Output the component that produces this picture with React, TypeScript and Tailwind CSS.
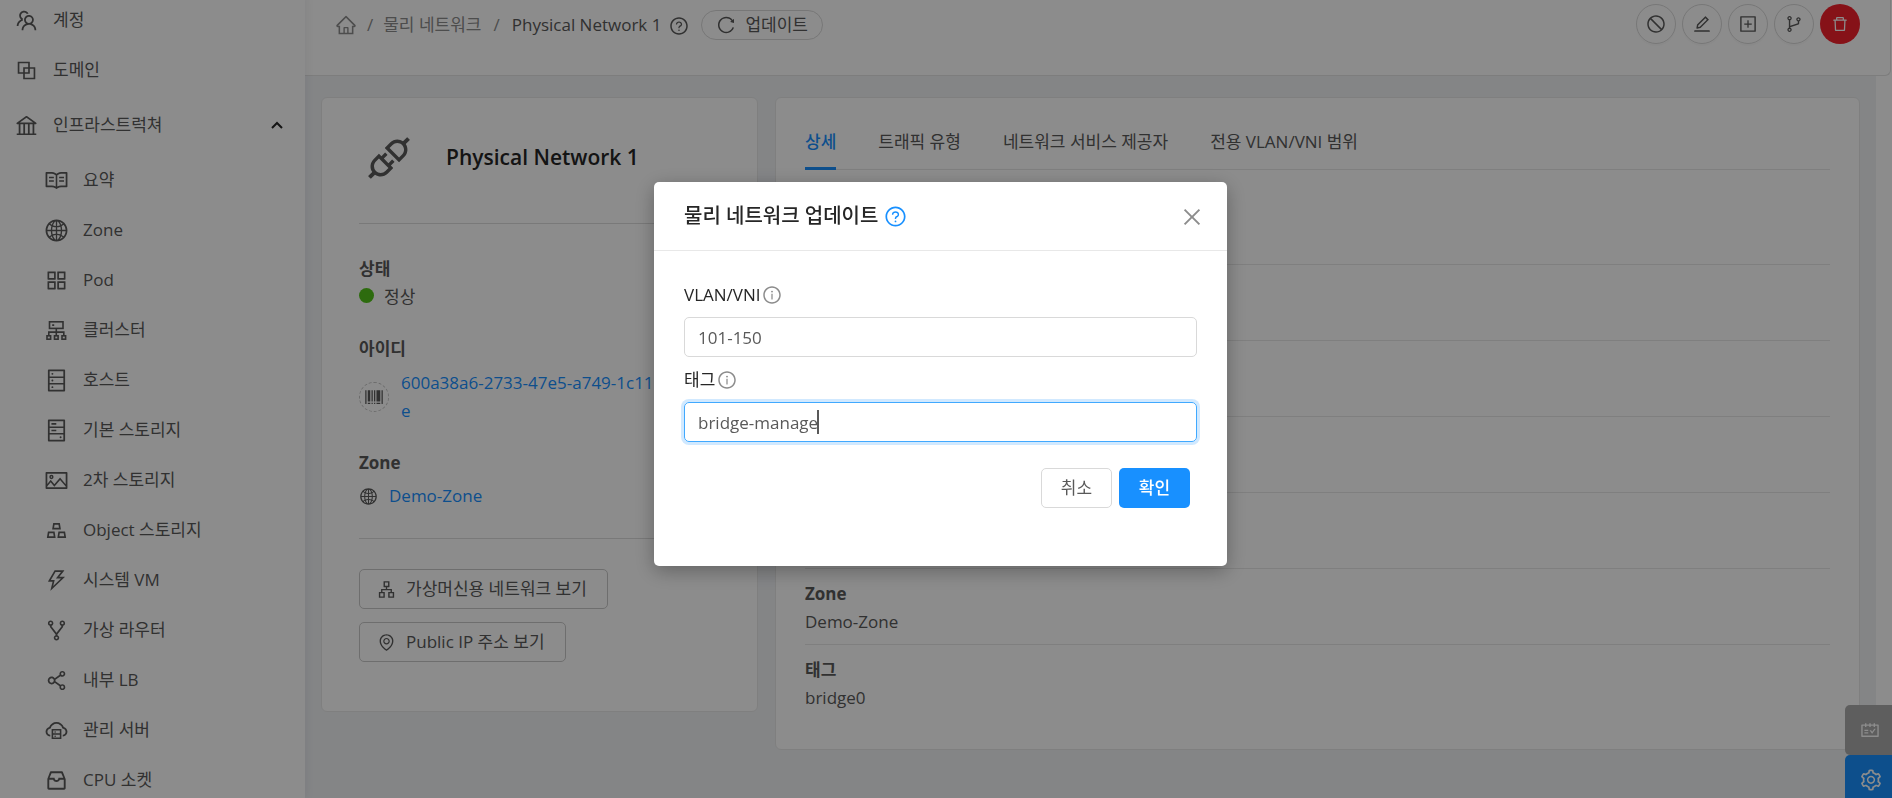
import type { ComponentType, ReactNode } from "react";
import {
  AiOutlineApartment,
  AiOutlineApi,
  AiOutlineAppstore,
  AiOutlineBank,
  AiOutlineBarcode,
  AiOutlineBlock,
  AiOutlineBranches,
  AiOutlineClose,
  AiOutlineCloudServer,
  AiOutlineDatabase,
  AiOutlineDelete,
  AiOutlineEdit,
  AiOutlineEnvironment,
  AiOutlineFork,
  AiOutlineGlobal,
  AiOutlineGold,
  AiOutlineHdd,
  AiOutlineHome,
  AiOutlineInbox,
  AiOutlineInfoCircle,
  AiOutlinePicture,
  AiOutlinePlusSquare,
  AiOutlineQuestionCircle,
  AiOutlineRead,
  AiOutlineReload,
  AiOutlineSchedule,
  AiOutlineSetting,
  AiOutlineShareAlt,
  AiOutlineStop,
  AiOutlineTeam,
  AiOutlineThunderbolt,
} from "react-icons/ai";

type Icon = ComponentType<{ className?: string }>;

function ClusterIcon({ className }: { className?: string }) {
  return (
    <svg viewBox="0 0 25 25" className={className} fill="none" stroke="currentColor" strokeWidth="1.6">
      <rect x="5.5" y="3.8" width="13.5" height="6.6" />
      <path d="M8.2 7.1h2M12.3 10.4v7.4M4.8 17.8v-3.7h15v3.7" />
      <rect x="3" y="17.8" width="3.6" height="3.4" />
      <rect x="10.5" y="17.8" width="3.6" height="3.4" />
      <rect x="18" y="17.8" width="3.6" height="3.4" />
    </svg>
  );
}

const infraItems: { label: string; icon: Icon }[] = [
  { label: "요약", icon: AiOutlineRead },
  { label: "Zone", icon: AiOutlineGlobal },
  { label: "Pod", icon: AiOutlineAppstore },
  { label: "클러스터", icon: ClusterIcon },
  { label: "호스트", icon: AiOutlineDatabase },
  { label: "기본 스토리지", icon: AiOutlineHdd },
  { label: "2차 스토리지", icon: AiOutlinePicture },
  { label: "Object 스토리지", icon: AiOutlineGold },
  { label: "시스템 VM", icon: AiOutlineThunderbolt },
  { label: "가상 라우터", icon: AiOutlineFork },
  { label: "내부 LB", icon: AiOutlineShareAlt },
  { label: "관리 서버", icon: AiOutlineCloudServer },
  { label: "CPU 소켓", icon: AiOutlineInbox },
];

function Sidebar() {
  return (
    <nav className="z-10 -mt-[5px] w-[305px] shrink-0 bg-white shadow-[2px_0_8px_rgba(0,21,41,0.06)]">
      <a href="#account" className="flex h-[50px] items-center gap-[14px] pl-[14px]">
        <AiOutlineTeam className="size-[25px]" />
        계정
      </a>
      <a href="#domain" className="flex h-[50px] items-center gap-[14px] pl-[14px]">
        <AiOutlineBlock className="size-[25px]" />
        도메인
      </a>
      <button
        type="button"
        aria-expanded="true"
        className="my-[5px] flex h-[50px] w-full items-center gap-[14px] pr-[22px] pl-[14px]"
      >
        <AiOutlineBank className="size-[25px]" />
        인프라스트럭쳐
        <svg viewBox="0 0 12 8" className="ml-auto h-2 w-3 text-[#262626]" fill="none" stroke="currentColor" strokeWidth="2">
          <path d="M1 7l5-5 5 5" />
        </svg>
      </button>
      <ul>
        {infraItems.map(({ label, icon: ItemIcon }) => (
          <li key={label}>
            <a href={`#${label}`} className="flex h-[50px] items-center gap-[14px] pl-[44px]">
              <ItemIcon className="size-[25px]" />
              {label}
            </a>
          </li>
        ))}
      </ul>
    </nav>
  );
}

const actions: { label: string; icon: Icon }[] = [
  { label: "비활성화", icon: AiOutlineStop },
  { label: "편집", icon: AiOutlineEdit },
  { label: "추가", icon: AiOutlinePlusSquare },
  { label: "분기", icon: AiOutlineBranches },
];

function Header() {
  return (
    <header className="mr-px flex h-[76px] items-start justify-between rounded-br-md border-r border-b border-[#e3e3e3] bg-white pt-1 pr-[30px] pl-[30px]">
      <div className="flex h-[41px] items-center">
        <a href="#home" aria-label="홈" className="text-[#8c8c8c]">
          <AiOutlineHome className="size-[22px]" />
        </a>
        <span className="px-[10px] text-[#8c8c8c]">/</span>
        <a href="#physical" className="text-[#8c8c8c]">
          물리 네트워크
        </a>
        <span className="px-3 text-[#8c8c8c]">/</span>
        <span>Physical Network 1</span>
        <button type="button" aria-label="도움말" className="ml-2 pt-0.5">
          <AiOutlineQuestionCircle className="size-5" />
        </button>
        <button
          type="button"
          className="ml-3 flex h-[30px] items-center gap-[9px] rounded-full border border-[#d9d9d9] px-[14px]"
        >
          <AiOutlineReload className="size-5" />
          업데이트
        </button>
      </div>
      <div className="flex gap-[6px]">
        {actions.map(({ label, icon: ActionIcon }) => (
          <button
            key={label}
            type="button"
            aria-label={label}
            className="flex size-10 items-center justify-center rounded-full border border-[#d9d9d9] shadow-[0_2px_0_rgba(0,0,0,0.02)]"
          >
            <ActionIcon className="size-5" />
          </button>
        ))}
        <button
          type="button"
          aria-label="삭제"
          className="flex size-10 items-center justify-center rounded-full bg-[#f5222d] text-white"
        >
          <AiOutlineDelete className="size-[18px]" />
        </button>
      </div>
    </header>
  );
}

function InfoCard() {
  return (
    <section className="rounded-md border border-[#e8e8e8] bg-white px-[37px] pb-[49px]">
      <div className="flex h-[126px] items-center gap-[31px] border-b border-[#dcdcdc] pb-[6px] pl-1">
        <AiOutlineApi className="size-[52px]" />
        <h1 className="text-[21px] font-semibold text-[#262626]">Physical Network 1</h1>
      </div>
      <h2 className="mt-[31px] leading-7 font-bold">상태</h2>
      <p className="flex h-7 items-center gap-[10px]">
        <span className="mb-1 size-[15px] rounded-full bg-[#52c41a]" />
        정상
      </p>
      <h2 className="mt-6 leading-7 font-bold">아이디</h2>
      <div className="mt-[6px] flex items-center gap-3">
        <span className="flex size-[30px] shrink-0 items-center justify-center rounded-full border border-dashed border-[#c4c4c4]">
          <AiOutlineBarcode className="size-5" />
        </span>
        <a href="#uuid" className="leading-7 break-all text-[#1890ff]">
          600a38a6-2733-47e5-a749-1c11
          <br />e
        </a>
      </div>
      <h2 className="mt-6 leading-7 font-bold">Zone</h2>
      <p className="mt-[5px] flex h-7 items-center gap-[11px]">
        <AiOutlineGlobal className="size-[19px]" />
        <a href="#zone" className="text-[#1890ff]">
          Demo-Zone
        </a>
      </p>
      <div className="mt-7 flex flex-col items-start gap-[13px] border-t border-[#dcdcdc] pt-[30px]">
        <button
          type="button"
          className="flex h-10 items-center gap-[10px] rounded-[5px] border border-[#c9c9c9] pr-5 pl-[17px]"
        >
          <AiOutlineApartment className="size-[19px]" />
          가상머신용 네트워크 보기
        </button>
        <button
          type="button"
          className="flex h-10 items-center gap-[10px] rounded-[5px] border border-[#c9c9c9] pr-5 pl-[17px]"
        >
          <AiOutlineEnvironment className="size-[19px]" />
          Public IP 주소 보기
        </button>
      </div>
    </section>
  );
}

const tabs = ["상세", "트래픽 유형", "네트워크 서비스 제공자", "전용 VLAN/VNI 범위"];

const details = [
  ["이름", "Physical Network 1"],
  ["상태", "정상"],
  ["VLAN/VNI", "101-150"],
  ["유형", "Physical Network"],
  ["범위", "Zone"],
  ["Zone", "Demo-Zone"],
  ["태그", "bridge0"],
];

function DetailCard() {
  return (
    <section className="rounded-md border border-[#e8e8e8] bg-white px-[29px] pb-7">
      <div role="tablist" className="mb-[19px] flex h-[72px] gap-[42px] border-b border-[#e8e8e8] pt-[18px]">
        {tabs.map((tab, i) => (
          <button
            key={tab}
            type="button"
            role="tab"
            aria-selected={i === 0}
            className={
              i === 0
                ? "-mb-px border-b-[3px] border-[#1890ff] font-medium text-[#1890ff]"
                : "-mb-px border-b-[3px] border-transparent"
            }
          >
            {tab}
          </button>
        ))}
      </div>
      <dl>
        {details.map(([name, value]) => (
          <div key={name} className="h-[76px] border-b border-[#e8e8e8] pt-[11px] leading-7 last:border-b-0">
            <dt className="font-bold">{name}</dt>
            <dd>{value}</dd>
          </div>
        ))}
      </dl>
    </section>
  );
}

function FieldLabel({ htmlFor, children }: { htmlFor: string; children: ReactNode }) {
  return (
    <label htmlFor={htmlFor} className="flex h-[45px] items-center gap-[2px] text-[#262626]">
      {children}
      <AiOutlineInfoCircle className="size-5 text-[#8c8c8c]" />
    </label>
  );
}

function UpdateDialog() {
  return (
    <div className="fixed inset-0 z-30 flex items-start justify-center bg-black/45 pt-[182px] pr-[11px]">
      <div
        role="dialog"
        aria-modal="true"
        aria-labelledby="dialog-title"
        className="w-[573px] rounded-[5px] bg-white shadow-[0_5px_20px_rgba(0,0,0,0.3)]"
      >
        <div className="flex h-[69px] items-center justify-between border-b border-[#e8e8e8] pr-[23px] pl-[30px]">
          <h2 id="dialog-title" className="flex items-center gap-[6px] text-[20px] font-medium text-[#262626]">
            물리 네트워크 업데이트
            <AiOutlineQuestionCircle className="size-[23px] text-[#1890ff]" />
          </h2>
          <button type="button" aria-label="닫기" className="pt-0.5 text-[#8c8c8c]">
            <AiOutlineClose className="size-6" />
          </button>
        </div>
        <form className="px-[30px] pt-[21px] pb-[58px]">
          <FieldLabel htmlFor="vlan">VLAN/VNI</FieldLabel>
          <input
            id="vlan"
            defaultValue="101-150"
            className="block h-10 w-full rounded-[5px] border border-[#d9d9d9] px-[13px] outline-none"
          />
          <FieldLabel htmlFor="tags">태그</FieldLabel>
          <div className="relative">
            <input
              id="tags"
              defaultValue="bridge-manage"
              className="block h-10 w-full rounded-[5px] border border-[#40a9ff] px-[13px] shadow-[0_0_0_3px_rgba(24,144,255,0.2)] outline-none"
            />
            <span className="absolute top-2 left-[133px] h-6 w-[2px] bg-[#595959]" />
          </div>
          <div className="mt-[26px] flex justify-end gap-[7px] pr-[7px]">
            <button type="button" className="h-10 w-[71px] rounded-[5px] border border-[#d9d9d9]">
              취소
            </button>
            <button type="submit" className="h-10 w-[71px] rounded-[5px] bg-[#1890ff] font-medium text-white">
              확인
            </button>
          </div>
        </form>
      </div>
    </div>
  );
}

export default function App() {
  return (
    <div className="flex h-screen overflow-hidden bg-white font-['Open_Sans','Noto_Sans_CJK_KR',sans-serif] text-[17px] text-[#595959]">
      <Sidebar />
      <div className="flex min-w-0 flex-1 flex-col">
        <Header />
        <main className="mr-4 grid flex-1 grid-cols-[29fr_72fr] items-start gap-[17px] bg-[#f0f2f5] px-4 pt-[21px]">
          <InfoCard />
          <DetailCard />
        </main>
      </div>
      <div className="fixed top-[705px] right-0 z-20 flex flex-col text-white">
        <button
          type="button"
          aria-label="일정"
          className="flex h-[50px] w-[47px] items-center justify-center rounded-l-[5px] bg-[#ababab] pl-[2px]"
        >
          <AiOutlineSchedule className="size-5" />
        </button>
        <button
          type="button"
          aria-label="설정"
          className="flex h-[50px] w-[47px] items-center justify-center rounded-l-[5px] bg-[#1890ff] pl-1"
        >
          <AiOutlineSetting className="size-6" />
        </button>
      </div>
      <UpdateDialog />
    </div>
  );
}
